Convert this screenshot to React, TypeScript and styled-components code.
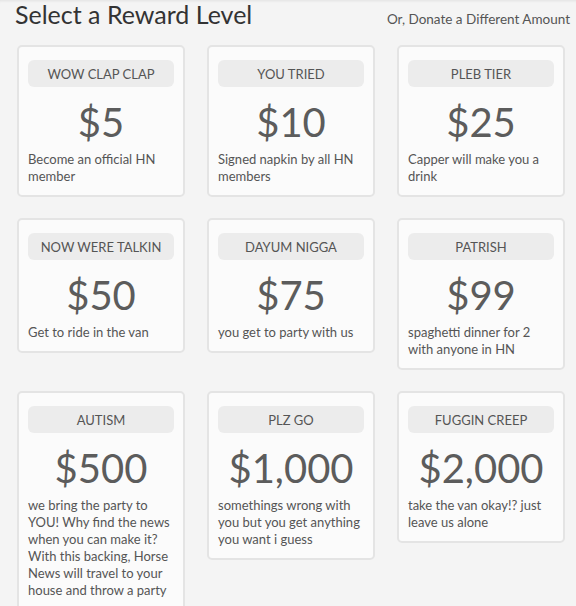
import React from 'react';
import styled, { createGlobalStyle } from 'styled-components';

const GlobalStyle = createGlobalStyle`
  body {
    margin: 0;
    background: #f4f4f4;
    font-family: "Lato", "Open Sans", sans-serif;
    color: #555;
  }
`;

const Page = styled.div`
  width: 576px;
  box-shadow: inset 0 3px 3px -2px rgba(0, 0, 0, 0.08);
`;

const Header = styled.div`
  display: flex;
  align-items: baseline;
  justify-content: space-between;
  padding: 0 6px 0 15px;
  height: 30px;
`;

const Title = styled.h1`
  margin: 0;
  font-size: 25px;
  font-weight: 400;
  line-height: 28px;
  color: #333;
`;

const DonateLink = styled.a`
  font-size: 13.5px;
  color: #555;
  text-decoration: none;
  cursor: pointer;
`;

const Grid = styled.div`
  display: grid;
  grid-template-columns: repeat(3, 168px);
  column-gap: 22px;
  row-gap: 21px;
  align-items: start;
  padding: 15px 0 0 17px;
`;

const Card = styled.div`
  background: #fbfbfb;
  border: 2px solid #e4e4e4;
  border-radius: 5px;
  padding: 13px 9px 10px;
  box-sizing: border-box;
`;

const TierName = styled.div`
  height: 27px;
  border-radius: 6px;
  background: #ececec;
  display: flex;
  align-items: center;
  justify-content: center;
  font-size: 13px;
  text-transform: uppercase;
  color: #555;
`;

const Price = styled.div`
  text-align: center;
  font-size: 40px;
  line-height: 48px;
  margin: 11px 0 5px;
  color: #5c5c5c;
`;

const Description = styled.div`
  font-size: 13px;
  line-height: 17px;
  color: #555;
`;

interface Reward {
  name: string;
  price: string;
  text: string;
}

const rewards: Reward[] = [
  { name: 'Wow clap clap', price: '$5', text: 'Become an official HN member' },
  { name: 'You tried', price: '$10', text: 'Signed napkin by all HN members' },
  { name: 'Pleb tier', price: '$25', text: 'Capper will make you a drink' },
  { name: 'Now were talkin', price: '$50', text: 'Get to ride in the van' },
  { name: 'Dayum nigga', price: '$75', text: 'you get to party with us' },
  { name: 'Patrish', price: '$99', text: 'spaghetti dinner for 2 with anyone in HN' },
  {
    name: 'Autism',
    price: '$500',
    text: 'we bring the party to YOU! Why find the news when you can make it? With this backing, Horse News will travel to your house and throw a party',
  },
  {
    name: 'Plz go',
    price: '$1,000',
    text: 'somethings wrong with you but you get anything you want i guess',
  },
  { name: 'Fuggin creep', price: '$2,000', text: 'take the van okay!? just leave us alone' },
];

const App: React.FC = () => {
  return (
    <Page>
      <GlobalStyle />
      <Header>
        <Title>Select a Reward Level</Title>
        <DonateLink>Or, Donate a Different Amount</DonateLink>
      </Header>
      <Grid>
        {rewards.map((reward) => (
          <Card key={reward.name}>
            <TierName>{reward.name}</TierName>
            <Price>{reward.price}</Price>
            <Description>{reward.text}</Description>
          </Card>
        ))}
      </Grid>
    </Page>
  );
};

export default App;
